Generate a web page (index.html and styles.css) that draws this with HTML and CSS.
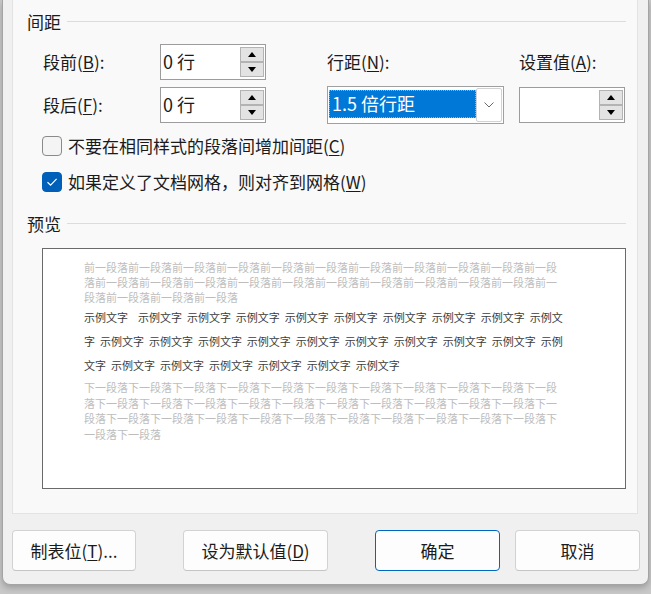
FILE: index.html
```html
<!DOCTYPE html>
<html lang="zh-CN">
<head>
<meta charset="utf-8">
<title>段落</title>
<link rel="stylesheet" href="styles.css">
</head>
<body>
<div class="dialog">
  <div class="panel">
    <div class="group-head"><span>间距</span><i class="rule"></i></div>
    <div class="spacing">
      <div class="lbl">段前(<u>B</u>):</div>
      <div class="spin">
        <span class="val">0 行</span>
        <span class="spinbtns"><b class="sb"><i class="tri up"></i></b><b class="sb"><i class="tri down"></i></b></span>
      </div>
      <div class="lbl">行距(<u>N</u>):</div>
      <div class="lbl">设置值(<u>A</u>):</div>

      <div class="lbl">段后(<u>F</u>):</div>
      <div class="spin">
        <span class="val">0 行</span>
        <span class="spinbtns"><b class="sb"><i class="tri up"></i></b><b class="sb"><i class="tri down"></i></b></span>
      </div>
      <div class="combo">
        <span class="sel">1.5 倍行距</span>
        <span class="drop"><svg width="10" height="6" viewBox="0 0 10 6"><polyline points="0.5,0.5 5,5 9.5,0.5" fill="none" stroke="#6a6a6a" stroke-width="1"/></svg></span>
      </div>
      <div class="spin spin-narrow">
        <span class="val"></span>
        <span class="spinbtns"><b class="sb"><i class="tri up"></i></b><b class="sb"><i class="tri down"></i></b></span>
      </div>
    </div>

    <div class="checks">
      <div class="check"><span class="box"></span><span>不要在相同样式的段落间增加间距(<u>C</u>)</span></div>
      <div class="check"><span class="box on"><svg width="12" height="10" viewBox="0 0 12 10"><polyline points="1.5,5.2 4.6,8.2 10.6,1.8" fill="none" stroke="#fff" stroke-width="1.2"/></svg></span><span>如果定义了文档网格，则对齐到网格(<u>W</u>)</span></div>
    </div>

    <div class="group-head group-preview"><span>预览</span><i class="rule"></i></div>

    <div class="preview">
      <div class="ghost">
        <div class="ln">前一段落前一段落前一段落前一段落前一段落前一段落前一段落前一段落前一段落前一段落前一段</div>
        <div class="ln">落前一段落前一段落前一段落前一段落前一段落前一段落前一段落前一段落前一段落前一段落前一</div>
        <div class="ln">段落前一段落前一段落前一段落</div>
      </div>
      <div class="sample">
        <div class="ln">示例文字  示例文字 示例文字 示例文字 示例文字 示例文字 示例文字 示例文字 示例文字 示例文</div>
        <div class="ln">字 示例文字 示例文字 示例文字 示例文字 示例文字 示例文字 示例文字 示例文字 示例文字 示例</div>
        <div class="ln">文字 示例文字 示例文字 示例文字 示例文字 示例文字 示例文字</div>
      </div>
      <div class="ghost after">
        <div class="ln">下一段落下一段落下一段落下一段落下一段落下一段落下一段落下一段落下一段落下一段落下一段</div>
        <div class="ln">落下一段落下一段落下一段落下一段落下一段落下一段落下一段落下一段落下一段落下一段落下一</div>
        <div class="ln">段落下一段落下一段落下一段落下一段落下一段落下一段落下一段落下一段落下一段落下一段落下</div>
        <div class="ln">一段落下一段落</div>
      </div>
    </div>
  </div>

  <div class="buttons">
    <button class="btn b1">制表位(<u>T</u>)...</button>
    <button class="btn b2">设为默认值(<u>D</u>)</button>
    <button class="btn b3 default">确定</button>
    <button class="btn b4">取消</button>
  </div>
</div>
</body>
</html>
```

FILE: styles.css
```css
* { box-sizing: border-box; }

html, body {
  margin: 0;
  padding: 0;
}

body {
  width: 651px;
  height: 594px;
  overflow: hidden;
  background: #c8c8c8;
  font-family: "Noto Sans CJK SC", "Noto Sans", sans-serif;
  font-size: 17px;
  color: #1b1b1b;
}

u { text-decoration-thickness: 1px; text-underline-offset: 2px; }

.dialog {
  margin-left: 2px;
  width: 647px;
  height: 585px;
  background: #f0f0f0;
  border: 1px solid #a4a4a4;
  border-top: none;
  border-radius: 0 0 8px 8px;
  box-shadow: 0 3px 6px rgba(0, 0, 0, 0.22);
  overflow: hidden;
}

.panel {
  margin-left: 9px;
  width: 626px;
  height: 514px;
  background: #f9f9f9;
  border: 1px solid #e3e3e3;
  border-top: none;
  padding-top: 10px;
}

.group-head {
  display: flex;
  align-items: center;
  height: 24px;
  line-height: 24px;
  padding-left: 14px;
  padding-right: 11px;
}

.group-head span { margin-right: 6px; }

.group-head .rule {
  flex: 1;
  height: 1px;
  background: #dcdcdc;
  margin-top: -1px;
}

.group-preview { margin-top: 12px; }

.spacing {
  display: grid;
  grid-template-columns: 117px 167px 192px 106px;
  grid-template-rows: 36px 38px;
  row-gap: 6px;
  align-items: center;
  margin-top: 10px;
  padding-left: 30px;
}

.lbl { line-height: 24px; white-space: nowrap; }

.spin {
  width: 106px;
  height: 36px;
  background: #fff;
  border: 1px solid #9c9c9c;
  display: flex;
  align-items: center;
  justify-content: space-between;
  padding: 0 1px 0 2px;
}

.spin .val {
  font-size: 18px;
  line-height: 24px;
  margin-top: -2px;
}

.spinbtns {
  display: flex;
  flex-direction: column;
  width: 24px;
}

.sb {
  display: flex;
  align-items: center;
  justify-content: center;
  height: 15px;
  background: #e3e3e3;
  border: 1px solid #b3b3b3;
}

.tri {
  width: 0;
  height: 0;
  border-left: 4px solid transparent;
  border-right: 4px solid transparent;
}

.tri.up { border-bottom: 5px solid #000; }
.tri.down { border-top: 5px solid #000; }

.combo {
  width: 177px;
  height: 38px;
  border: 1px solid #a0a0a0;
  background: #fff;
  display: flex;
  align-items: center;
  padding-left: 1px;
  padding-right: 1px;
}

.combo .sel {
  width: 148px;
  height: 28px;
  margin-top: -3px;
  background: #0078d7;
  color: #fff;
  font-size: 18px;
  line-height: 26px;
  padding-left: 3px;
  outline: 1px dotted #d9a24a;
  outline-offset: -1px;
  white-space: nowrap;
}

.combo .drop {
  width: 26px;
  height: 34px;
  border: 1px solid #d2d2d2;
  border-radius: 2px;
  background: #fff;
  display: flex;
  align-items: center;
  justify-content: center;
}

.checks {
  margin-top: 4px;
  padding-left: 29px;
}

.check {
  display: flex;
  align-items: center;
  height: 36px;
  line-height: 24px;
}

.check .box {
  width: 20px;
  height: 20px;
  border: 1px solid #8a8a8a;
  border-radius: 4px;
  background: #f4f4f4;
  margin-right: 6px;
  display: flex;
  align-items: center;
  justify-content: center;
}

.check .box.on {
  background: #005fb8;
  border-color: #005fb8;
}

.preview {
  margin-top: 12px;
  margin-left: 29px;
  width: 584px;
  height: 241px;
  background: #fff;
  border: 1px solid #6a6a6a;
  padding-top: 11px;
  padding-left: 41px;
  font-size: 11px;
  overflow: hidden;
}

.ln { white-space: pre; }

.ghost {
  color: #bdbdbd;
  line-height: 15px;
}

.ghost.after {
  margin-top: 3px;
  line-height: 15.5px;
}

.sample {
  color: #3c3c3c;
  line-height: 24px;
  word-spacing: 2.5px;
}

.buttons {
  display: flex;
  margin-top: 16px;
  padding-left: 9px;
}

.btn {
  height: 41px;
  background: #fdfdfd;
  border: 1px solid #d2d2d2;
  border-bottom-color: #c4c4c4;
  border-radius: 4px;
  font-family: "Noto Sans CJK SC", "Noto Sans", sans-serif;
  font-size: 17px;
  color: #1b1b1b;
  padding: 0;
  line-height: 24px;
}

.b1 { width: 124px; }
.b2 { width: 145px; margin-left: 47px; }
.b3 { width: 125px; margin-left: 47px; }
.b4 { width: 125px; margin-left: 15px; }

.btn.default {
  border-color: #0067c0;
}
```
